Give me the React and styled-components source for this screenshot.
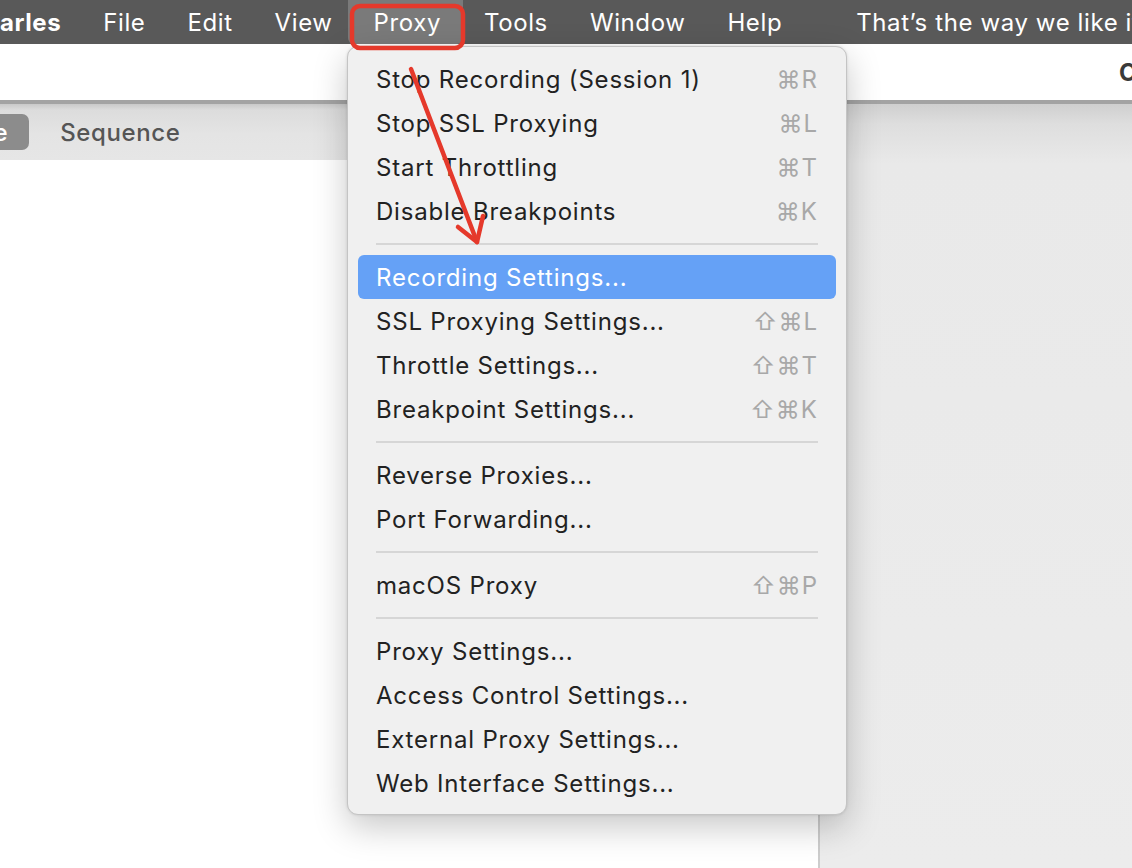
import React from 'react';
import styled, { createGlobalStyle } from 'styled-components';

const GlobalStyle = createGlobalStyle`
  html, body {
    margin: 0;
    padding: 0;
    background: #ffffff;
  }
  body {
    font-family: Inter, "Noto Sans", "Liberation Sans", sans-serif;
    -webkit-font-smoothing: antialiased;
  }
`;

const menuBarItems = ['File', 'Edit', 'View', 'Proxy', 'Tools', 'Window', 'Help'];

const proxyMenu = [
  [
    { label: 'Stop Recording (Session 1)', keys: '⌘R' },
    { label: 'Stop SSL Proxying', keys: '⌘L' },
    { label: 'Start Throttling', keys: '⌘T' },
    { label: 'Disable Breakpoints', keys: '⌘K' },
  ],
  [
    { label: 'Recording Settings...', active: true },
    { label: 'SSL Proxying Settings...', keys: '⇧⌘L' },
    { label: 'Throttle Settings...', keys: '⇧⌘T' },
    { label: 'Breakpoint Settings...', keys: '⇧⌘K' },
  ],
  [
    { label: 'Reverse Proxies...' },
    { label: 'Port Forwarding...' },
  ],
  [
    { label: 'macOS Proxy', keys: '⇧⌘P' },
  ],
  [
    { label: 'Proxy Settings...' },
    { label: 'Access Control Settings...' },
    { label: 'External Proxy Settings...' },
    { label: 'Web Interface Settings...' },
  ],
];

export default function App() {
  return (
    <>
      <GlobalStyle />
      <Screen>
        <MenuBar>
          <AppName>Charles</AppName>
          {menuBarItems.map((item) => (
            <BarItem key={item} open={item === 'Proxy'}>{item}</BarItem>
          ))}
          <Ticker>That’s the way we like it</Ticker>
        </MenuBar>

        <Window>
          <Toolbar>
            <Title>Charles 4.6.2 - Session 1</Title>
          </Toolbar>
          <Body>
            <LeftPane>
              <TabBar>
                <TabButton selected>Structure</TabButton>
                <TabButton>Sequence</TabButton>
              </TabBar>
              <Content />
            </LeftPane>
            <RightPane />
          </Body>
        </Window>

        <Menu>
          {proxyMenu.map((group, gi) => (
            <React.Fragment key={gi}>
              {gi > 0 && <Separator />}
              {group.map((item) => (
                <MenuItem key={item.label} active={item.active}>
                  <span>{item.label}</span>
                  {item.keys && <Shortcut>{item.keys}</Shortcut>}
                </MenuItem>
              ))}
            </React.Fragment>
          ))}
        </Menu>

        <Annotation width="1132" height="868" viewBox="0 0 1132 868">
          <rect x="352" y="6" width="111" height="42" rx="8" fill="none" stroke="#e5392b" strokeWidth="4.5" />
          <g stroke="#e5392b" strokeWidth="4.5" strokeLinecap="round" fill="none">
            <line x1="411" y1="69" x2="477" y2="242" />
            <polyline points="458,227 477,242 483,216" strokeLinejoin="round" />
          </g>
        </Annotation>
      </Screen>
    </>
  );
}

const Screen = styled.div`
  position: relative;
  width: 1132px;
  height: 868px;
  overflow: hidden;
  display: flex;
  flex-direction: column;
`;

const MenuBar = styled.div`
  display: flex;
  align-items: center;
  height: 44px;
  background: #595959;
  color: #ffffff;
  font-size: 24px;
  letter-spacing: 0.6px;
  white-space: nowrap;
  flex-shrink: 0;
`;

const AppName = styled.div`
  font-weight: 700;
  margin-left: -34px;
  padding-right: 21px;
`;

const BarItem = styled.div`
  display: flex;
  align-items: center;
  height: 44px;
  padding: 0 21px;
  background: ${(p) => (p.open ? '#7a7a7a' : 'transparent')};
  border-radius: ${(p) => (p.open ? '0 0 6px 6px' : '0')};
  ${(p) => p.open && 'padding: 0 22px 0 26px; margin-left: -6px;'}
`;

const Ticker = styled.div`
  padding-left: 53px;
`;

const Window = styled.div`
  flex: 1;
  display: flex;
  flex-direction: column;
`;

const Toolbar = styled.div`
  height: 56px;
  background: #ffffff;
  display: flex;
  align-items: center;
  padding-left: 1119px;
  overflow: hidden;
  white-space: nowrap;
  border-bottom: 4px solid #a3a3a3;
  flex-shrink: 0;
`;

const Title = styled.div`
  font-size: 24px;
  font-weight: 700;
  color: #3a3a3a;
`;

const Body = styled.div`
  flex: 1;
  display: flex;
`;

const LeftPane = styled.div`
  width: 818px;
  display: flex;
  flex-direction: column;
  border-right: 2px solid #cdcdcd;
`;

const TabBar = styled.div`
  height: 56px;
  display: flex;
  align-items: center;
  gap: 10px;
  background: linear-gradient(#c9c9c9 0px, #dcdcdc 6px, #e4e4e4 30px, #e6e6e6 100%);
  overflow: hidden;
  white-space: nowrap;
`;

const TabButton = styled.div`
  height: 36px;
  display: flex;
  align-items: center;
  padding: 0 21px;
  border-radius: 7px;
  font-size: 24px;
  font-weight: 500;
  letter-spacing: 0.6px;
  color: ${(p) => (p.selected ? '#ffffff' : '#555555')};
  background: ${(p) => (p.selected ? '#8c8c8c' : 'transparent')};
  ${(p) => p.selected && 'margin-left: -125px;'}
`;

const Content = styled.div`
  flex: 1;
  background: #ffffff;
`;

const RightPane = styled.div`
  flex: 1;
  background: linear-gradient(#cfcfcf 0px, #dedede 20px, #e9e9e9 60px, #ececec 100%);
`;

const Menu = styled.div`
  position: absolute;
  left: 347px;
  top: 46px;
  width: 500px;
  box-sizing: border-box;
  padding: 10px 10px 9px;
  background: #f0f0f0;
  border: 1px solid #c4c4c4;
  border-radius: 11px;
  box-shadow: 0 12px 34px rgba(0, 0, 0, 0.22), 0 0 3px rgba(0, 0, 0, 0.12);
  display: flex;
  flex-direction: column;
`;

const MenuItem = styled.div`
  height: 44px;
  display: flex;
  align-items: center;
  justify-content: space-between;
  padding: 0 18px;
  border-radius: 6px;
  font-size: 24px;
  letter-spacing: 0.8px;
  color: ${(p) => (p.active ? '#ffffff' : '#222222')};
  background: ${(p) => (p.active ? '#65a1f6' : 'transparent')};
  white-space: nowrap;
`;

const Shortcut = styled.span`
  color: #a8a8a8;
  letter-spacing: 1px;
`;

const Separator = styled.div`
  height: 2px;
  margin: 10px 18px 10px 18px;
  background: #d6d6d6;
`;

const Annotation = styled.svg`
  position: absolute;
  left: 0;
  top: 0;
  pointer-events: none;
`;
